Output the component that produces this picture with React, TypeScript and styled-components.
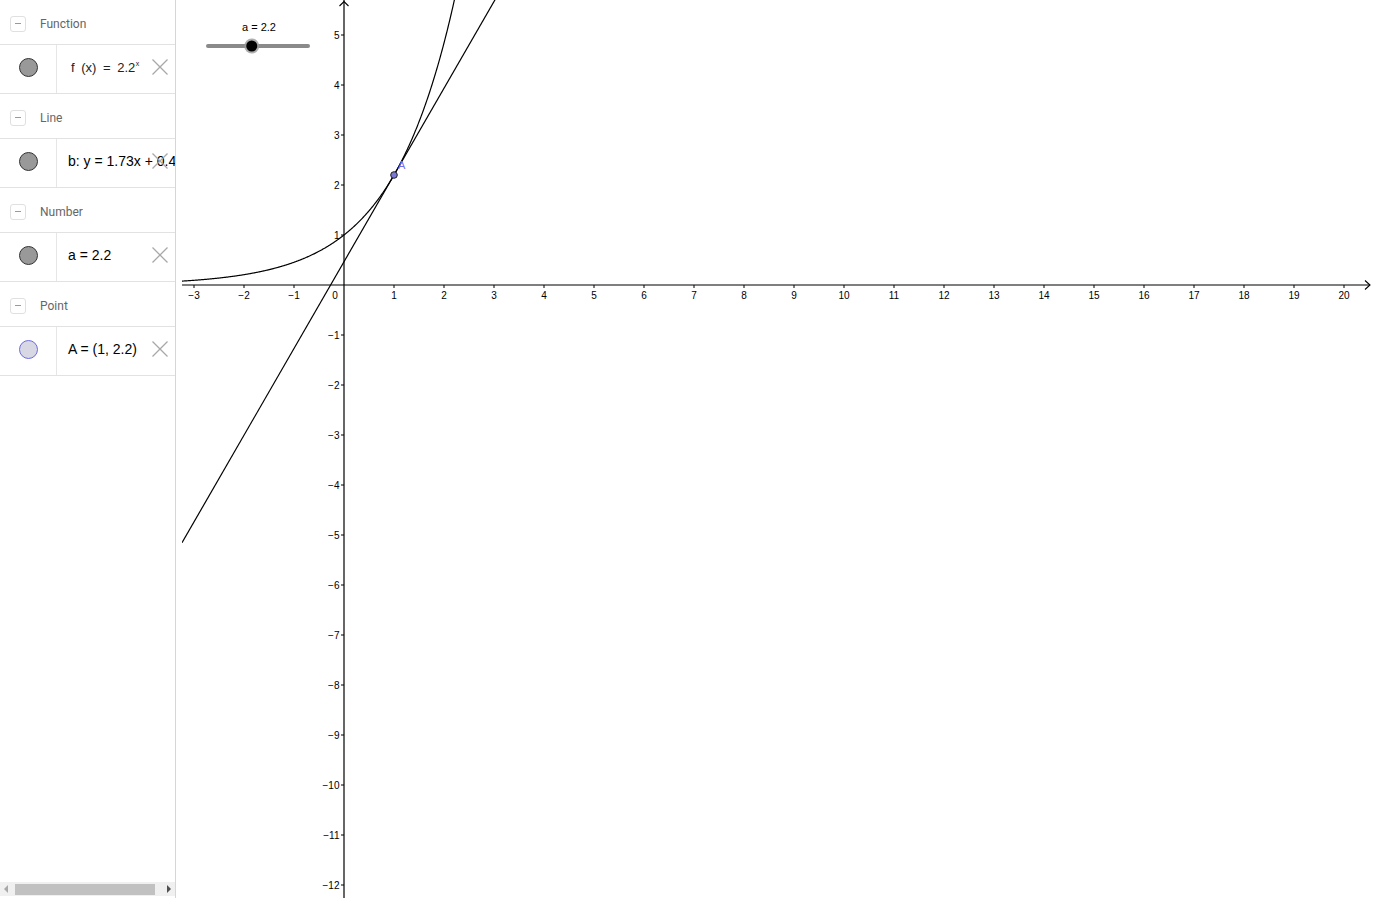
import React from "react";
import styled, { createGlobalStyle } from "styled-components";

const Global = createGlobalStyle`
  html, body { margin: 0; padding: 0; background: #fff; overflow: hidden; }
  #root { height: 100vh; }
`;

const Page = styled.div`
  display: flex;
  width: 1373px;
  height: 898px;
  font-family: "Liberation Sans", Arial, sans-serif;
`;

const Panel = styled.aside`
  width: 175px;
  flex: 0 0 175px;
  border-right: 1px solid #d6d6d6;
  display: flex;
  flex-direction: column;
  overflow: hidden;
`;

const List = styled.div`
  flex: 1;
  overflow: hidden;
`;

const Header = styled.div`
  height: 41px;
  padding-top: 3px;
  border-bottom: 1px solid #e2e2e2;
  display: flex;
  align-items: center;
  gap: 14px;
  padding-left: 10px;
  box-sizing: content-box;
`;

const Toggle = styled.div`
  width: 14px;
  height: 14px;
  border: 1px solid #e0e0e0;
  border-radius: 3px;
  display: flex;
  align-items: center;
  justify-content: center;
  &::after {
    content: "";
    width: 6px;
    height: 1px;
    background: #9a9a9a;
  }
`;

const HeaderText = styled.span`
  font-family: Roboto, "Liberation Sans", sans-serif;
  font-size: 12px;
  color: #666;
`;

const Row = styled.div`
  height: 44px;
  padding-bottom: 4px;
  border-bottom: 1px solid #e2e2e2;
  display: flex;
  position: relative;
`;

const MarbleCell = styled.div`
  width: 56px;
  flex: 0 0 56px;
  margin-bottom: -4px;
  padding-bottom: 4px;
  border-right: 1px solid #e6e6e6;
  display: flex;
  align-items: center;
  justify-content: center;
`;

const Marble = styled.div<{ $fill: string; $stroke: string }>`
  width: 17px;
  height: 17px;
  border-radius: 50%;
  background: ${(p) => p.$fill};
  border: 1px solid ${(p) => p.$stroke};
`;

const Formula = styled.div<{ $pad?: number }>`
  flex: 1;
  display: flex;
  align-items: center;
  padding-left: ${(p) => p.$pad ?? 11}px;
  font-size: 14px;
  color: #000;
  white-space: nowrap;
  overflow: hidden;
`;

const FxText = styled.span`
  font-family: "Liberation Sans", Arial, sans-serif;
  font-size: 13px;
  color: #222;
  word-spacing: 3px;
  sup {
    font-size: 7px;
    vertical-align: 6px;
    margin-left: 0.5px;
  }
`;

const Close = styled.div`
  position: absolute;
  right: 7px;
  top: 14px;
  width: 16px;
  height: 16px;
  display: flex;
`;

const ScrollBar = styled.div`
  height: 14px;
  margin-bottom: 2px;
  background: #f0f0f0;
  display: flex;
  align-items: center;
  justify-content: space-between;
  padding: 0 4px;
`;

const Thumb = styled.div`
  flex: 1;
  height: 11px;
  background: #c1c1c1;
  margin: 0 12px 0 7px;
`;

const Arrow = styled.div<{ $dir: "l" | "r"; $color: string }>`
  width: 0;
  height: 0;
  border-top: 4px solid transparent;
  border-bottom: 4px solid transparent;
  ${(p) =>
    p.$dir === "l"
      ? `border-right: 4px solid ${p.$color};`
      : `border-left: 4px solid ${p.$color};`}
`;

const Splitter = styled.div`
  width: 6px;
  flex: 0 0 6px;
  background: #fff;
`;

const Canvas = styled.div`
  flex: 1;
  position: relative;
  overflow: hidden;
`;

const XIcon = () => (
  <svg width="16" height="16" viewBox="0 0 16 16">
    <path d="M0.5 0.5 L15.5 15.5 M15.5 0.5 L0.5 15.5" stroke="#a8a8a8" strokeWidth="1.3" fill="none" />
  </svg>
);

type Item = {
  group: string;
  fill: string;
  stroke: string;
  content: React.ReactNode;
  pad?: number;
};

const items: Item[] = [
  {
    group: "Function",
    fill: "#999",
    stroke: "#333",
    pad: 14,
    content: (
      <FxText>
        f (x) = 2.2<sup>x</sup>
      </FxText>
    ),
  },
  { group: "Line", fill: "#999", stroke: "#333", content: "b: y = 1.73x + 0.47" },
  { group: "Number", fill: "#999", stroke: "#333", content: "a = 2.2" },
  { group: "Point", fill: "#d8d8e4", stroke: "#6b6bea", content: "A = (1, 2.2)" },
];

// Graph constants (canvas coords; canvas starts at page x=182)
const W = 1191;
const H = 898;
const OX = 162;
const OY = 285;
const S = 50;
const A = 2.2;
const slope = Math.log(A) * A;
const icpt = A - slope;

const toPx = (x: number) => OX + x * S;
const toPy = (y: number) => OY - y * S;

function curvePath() {
  const pts: string[] = [];
  for (let px = 0; px <= 320; px += 0.5) {
    const x = (px - OX) / S;
    const py = toPy(Math.pow(A, x));
    pts.push(`${px.toFixed(1)},${py.toFixed(2)}`);
    if (py < -5) break;
  }
  return "M" + pts.join(" L");
}

const minus = (n: number) => (n < 0 ? `\u2212${-n}` : `${n}`);

const Graph = () => {
  const xTicks: number[] = [];
  for (let i = -3; i <= 20; i++) if (i !== 0) xTicks.push(i);
  const yTicks: number[] = [];
  for (let i = 5; i >= -12; i--) if (i !== 0) yTicks.push(i);

  const lx0 = -OX / S;
  const ly0 = slope * lx0 + icpt;
  const yTop = (OY + 5) / S;
  const lx1 = (yTop - icpt) / slope;

  const sx0 = 26;
  const sx1 = 126;
  const knob = 24 + (104 * A) / 5;

  return (
    <svg width={W} height={H} style={{ display: "block" }} fontFamily="'Liberation Sans', Arial, sans-serif">
      {/* axes */}
      <line x1={0} y1={OY} x2={1188} y2={OY} stroke="#000" strokeWidth={1.2} />
      <path d={`M1183 280.5 L1188 285 L1183 289.5`} stroke="#000" strokeWidth={1.1} fill="none" />
      <line x1={OX} y1={0} x2={OX} y2={H} stroke="#000" strokeWidth={1.2} />
      <path d={`M${OX - 4.5} 6 L${OX} 1.5 L${OX + 4.5} 6`} stroke="#000" strokeWidth={1.1} fill="none" />

      {xTicks.map((i) => (
        <g key={`x${i}`}>
          <line x1={toPx(i)} y1={OY} x2={toPx(i)} y2={OY + 3} stroke="#000" strokeWidth={1} />
          <text x={toPx(i)} y={OY + 13.5} fontSize={10} textAnchor="middle" fill="#000">
            {minus(i)}
          </text>
        </g>
      ))}
      <text x={OX - 9} y={OY + 13.5} fontSize={10} textAnchor="middle" fill="#000">
        0
      </text>
      {yTicks.map((i) => (
        <g key={`y${i}`}>
          <line x1={OX - 3} y1={toPy(i)} x2={OX} y2={toPy(i)} stroke="#000" strokeWidth={1} />
          <text x={OX - 4.5} y={toPy(i) + 3.5} fontSize={10} textAnchor="end" fill="#000">
            {minus(i)}
          </text>
        </g>
      ))}

      {/* function and tangent */}
      <path d={curvePath()} stroke="#000" strokeWidth={1.2} fill="none" />
      <line x1={0} y1={toPy(ly0)} x2={toPx(lx1)} y2={-5} stroke="#000" strokeWidth={1.2} />

      {/* point A */}
      <circle cx={toPx(1)} cy={toPy(A)} r={3.3} fill="#7a7ad6" stroke="#222" strokeWidth={1} />
      <text x={toPx(1) + 4} y={toPy(A) - 6} fontSize={11} fill="#7070ee">
        A
      </text>

      {/* slider */}
      <text x={77} y={31} fontSize={11} textAnchor="middle" fill="#000">
        a = 2.2
      </text>
      <line x1={sx0} y1={46} x2={sx1} y2={46} stroke="#8a8a8a" strokeWidth={4} strokeLinecap="round" />
      <circle cx={knob} cy={46} r={7.5} fill="#9a9a9a" opacity={0.8} />
      <circle cx={knob} cy={46} r={5.5} fill="#000" />
    </svg>
  );
};

export default function App() {
  return (
    <>
      <Global />
      <Page>
        <Panel>
          <List>
            {items.map((it) => (
              <React.Fragment key={it.group}>
                <Header>
                  <Toggle />
                  <HeaderText>{it.group}</HeaderText>
                </Header>
                <Row>
                  <MarbleCell>
                    <Marble $fill={it.fill} $stroke={it.stroke} />
                  </MarbleCell>
                  <Formula $pad={it.pad}>{it.content}</Formula>
                  <Close>
                    <XIcon />
                  </Close>
                </Row>
              </React.Fragment>
            ))}
          </List>
          <ScrollBar>
            <Arrow $dir="l" $color="#a8a8a8" />
            <Thumb />
            <Arrow $dir="r" $color="#505050" />
          </ScrollBar>
        </Panel>
        <Splitter />
        <Canvas>
          <Graph />
        </Canvas>
      </Page>
    </>
  );
}
